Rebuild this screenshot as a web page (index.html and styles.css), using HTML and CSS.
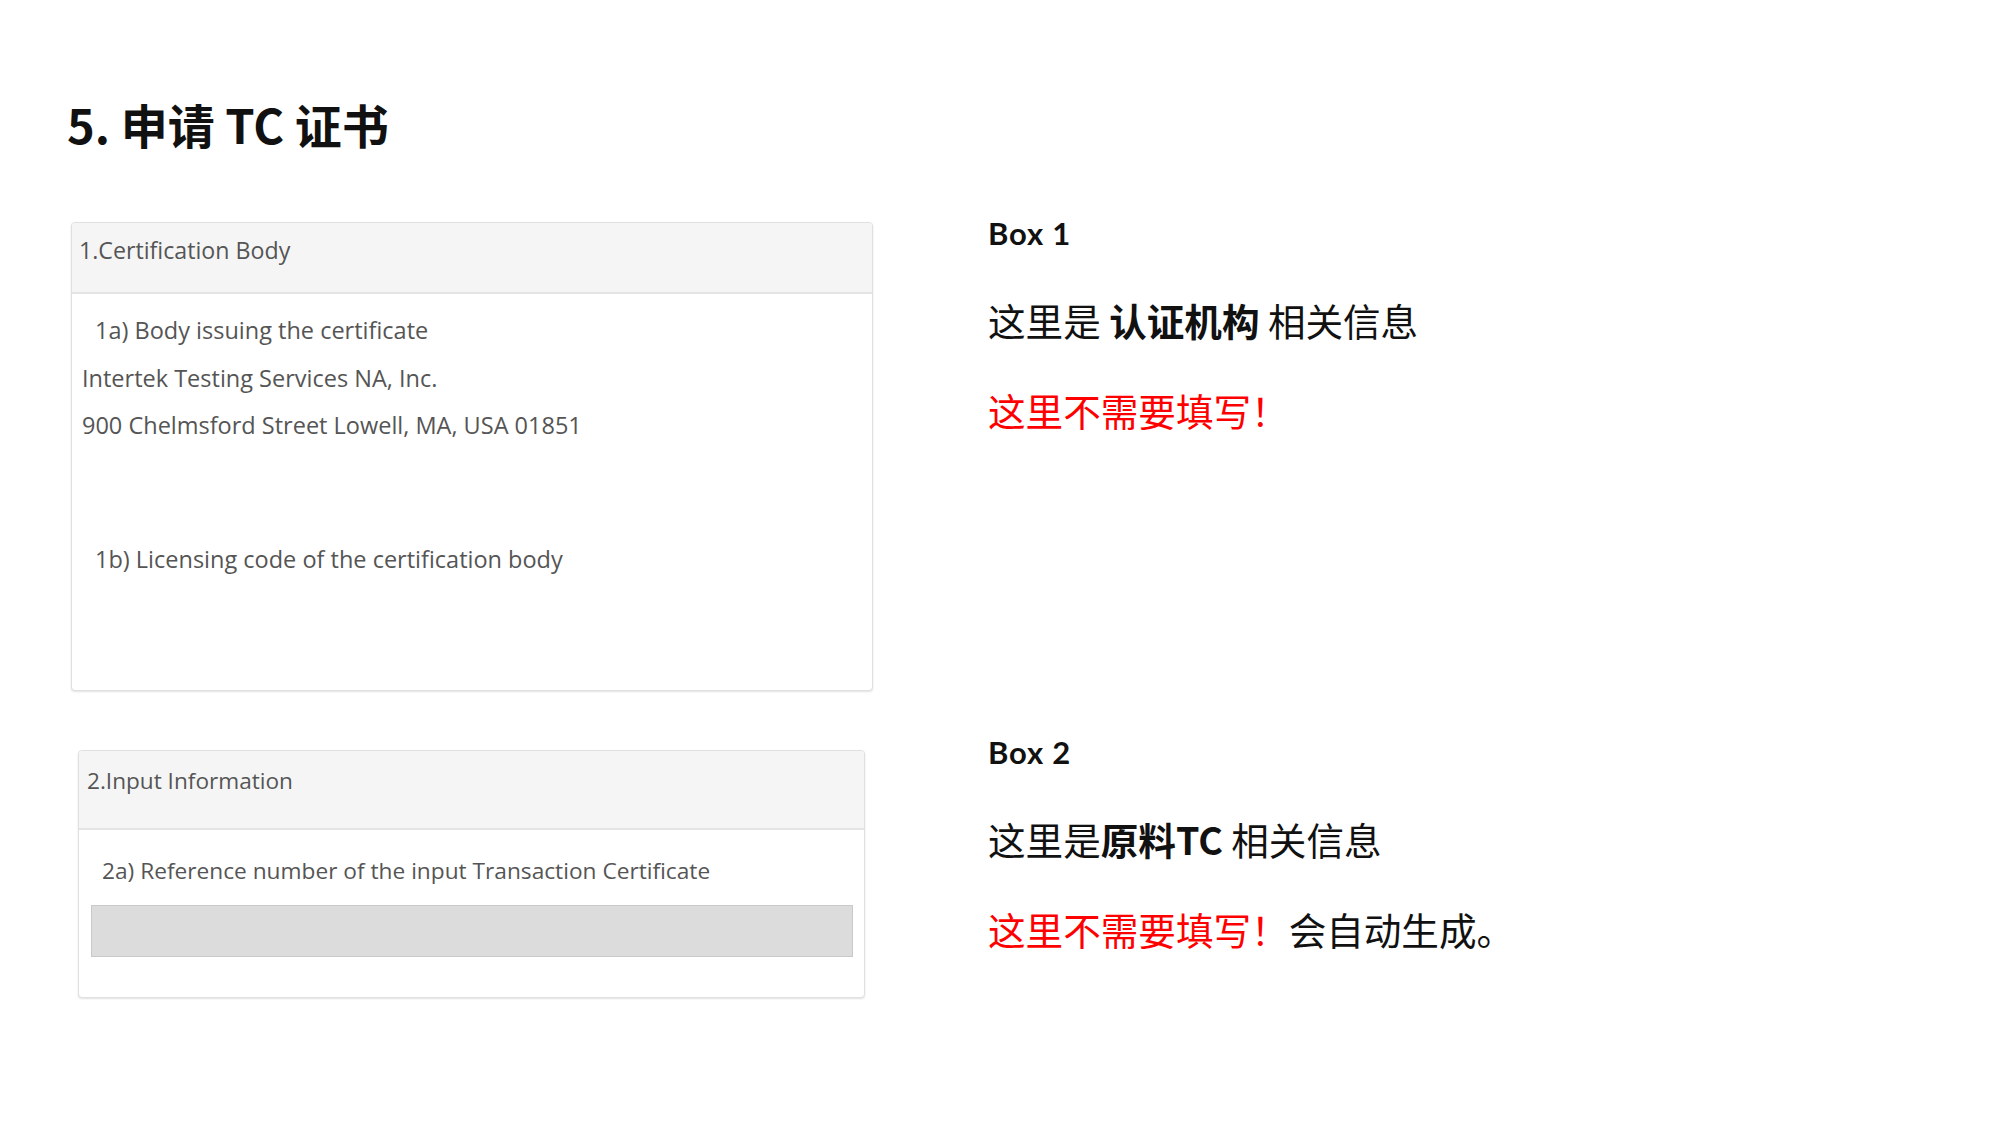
FILE: index.html
```html
<!DOCTYPE html>
<html lang="zh-CN">
<head>
<meta charset="utf-8">
<title>5. 申请 TC 证书</title>
<link rel="stylesheet" href="styles.css">
</head>
<body>
<main class="slide">
  <h1 class="title">5. 申请 TC 证书</h1>

  <section class="row row-one">
    <div class="panel panel-one">
      <div class="panel-head">1.Certification Body</div>
      <div class="panel-body">
        <div class="label">1a) Body issuing the certificate</div>
        <div class="value first-value">Intertek Testing Services NA, Inc.</div>
        <div class="value">900 Chelmsford Street Lowell, MA, USA 01851</div>
        <div class="label label-b">1b) Licensing code of the certification body</div>
      </div>
    </div>
    <div class="note">
      <h2 class="note-title">Box 1</h2>
      <p class="note-line">这里是 <b>认证机构</b> 相关信息</p>
      <p class="note-line warn">这里不需要填写！</p>
    </div>
  </section>

  <section class="row row-two">
    <div class="panel panel-two">
      <div class="panel-head">2.Input Information</div>
      <div class="panel-body">
        <div class="label">2a) Reference number of the input Transaction Certificate</div>
        <div class="field"></div>
      </div>
    </div>
    <div class="note">
      <h2 class="note-title">Box 2</h2>
      <p class="note-line">这里是<b>原料TC</b> 相关信息</p>
      <p class="note-line"><span class="warn">这里不需要填写！</span>会自动生成。</p>
    </div>
  </section>
</main>
</body>
</html>
```
FILE: styles.css
```css
* { box-sizing: border-box; }

html, body {
  margin: 0;
  padding: 0;
  background: #ffffff;
}

.slide {
  width: 2000px;
  height: 1125px;
  overflow: hidden;
  font-family: "Noto Sans CJK SC", "Noto Sans", sans-serif;
  color: #111;
}

.title {
  margin: 100px 0 0 67px;
  font-size: 47px;
  line-height: 47px;
  font-weight: 700;
  color: #111;
  font-family: "Noto Sans CJK SC", sans-serif;
}

.row {
  display: grid;
  grid-template-columns: 988px 1fr;
  align-items: start;
}

.row-one { margin-top: 71px; }
.row-two { margin-top: 46px; }

/* ---------- panels (form screenshots) ---------- */
.panel {
  background: #fff;
  border: 1px solid #e0e0e0;
  border-radius: 4px;
  box-shadow: 0 1px 2px rgba(0, 0, 0, 0.12);
  font-family: "Open Sans", "Noto Sans", sans-serif;
  line-height: 20px;
  color: #555;
  overflow: hidden;
}

.panel-one {
  margin: 4px 0 0 71px;
  width: 802px;
  height: 469px;
  font-size: 23.5px;
}

.panel-two {
  margin: 13px 0 0 78px;
  width: 787px;
  height: 248px;
  font-size: 22.7px;
}

.panel-head {
  background: #f5f5f5;
  border-bottom: 2px solid #e4e4e4;
}

.panel-one .panel-head { height: 71px; padding: 17px 0 0 7px; font-size: 23.2px; }
.panel-two .panel-head { height: 79px; padding: 20px 0 0 8px; font-size: 22.6px; }

.panel-one .panel-body { padding: 26px 10px 0 10px; }
.panel-two .panel-body { padding: 31px 11px 0 12px; }

.panel-one .label { padding-left: 13px; }
.panel-two .label { padding-left: 11px; }

.first-value { margin-top: 28px; }
.value + .value { margin-top: 27px; }
.label-b { margin-top: 114px; }

.field {
  margin-top: 24px;
  height: 52px;
  background: #dcdcdc;
  border: 1px solid #c9c9c9;
}

/* ---------- notes on the right ---------- */
.note-title {
  margin: 0;
  font-family: Lato, "Noto Sans", sans-serif;
  font-weight: 700;
  font-size: 31px;
  line-height: 31px;
  letter-spacing: 0.8px;
  color: #111;
}

.note-line {
  margin: 52px 0 0 0;
  font-family: "Noto Sans CJK SC", sans-serif;
  font-size: 37.6px;
  line-height: 38px;
  color: #111;
  white-space: nowrap;
}

.note-line + .note-line { margin-top: 52px; }

.note-line b { font-weight: 700; }

.warn { color: #ff0000; }
```
